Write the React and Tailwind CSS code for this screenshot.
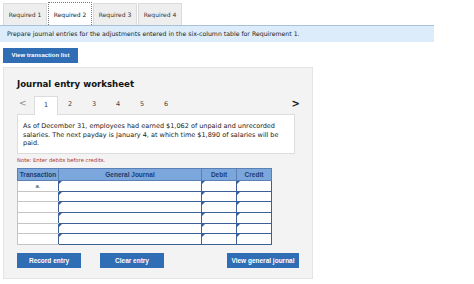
import React from 'react';

const tabs = ['Required 1', 'Required 2', 'Required 3', 'Required 4'];
const pages = ['1', '2', '3', '4', '5', '6'];
const rows = ['a.', '', '', '', '', ''];

function Marker() {
  // small blue triangle in the corner of each input
  return (
    <span className="absolute top-0 left-0 w-0 h-0 border-t-[3px] border-r-[3px] border-t-[#2f5fa8] border-r-transparent" />
  );
}

export default function App() {
  return (
    <div className="w-[474px] h-[284px] bg-white overflow-hidden font-['DejaVu_Sans',sans-serif] text-[#333]">
      {/* Requirement tabs */}
      <div className="flex pl-[3px] pt-[3px] h-[25px] items-end">
        {tabs.map((t, i) => (
          <div
            key={t}
            className={
              i === 1
                ? 'w-[44px] h-[23px] mr-[1px] flex items-center justify-center bg-white border border-dotted border-[#777] border-b-0 text-[6px] text-[#222]'
                : 'w-[44px] h-[22px] mr-[1px] flex items-center justify-center bg-[#eeeeee] border border-[#dcdcdc] border-b-0 text-[6px] text-[#333]'
            }
          >
            {t}
          </div>
        ))}
      </div>

      {/* Instruction banner */}
      <div className="w-[434px] h-[17px] bg-[#dcecfa] border-t border-[#a9c1d6] flex items-center px-[7px] text-[6.2px] text-[#222]">
        Prepare journal entries for the adjustments entered in the six-column table for Requirement 1.
      </div>

      <div className="ml-[3px] mt-[6px] w-[75px] h-[15px] bg-[#2f6db5] text-white font-['Liberation_Sans',sans-serif] font-bold text-[6px] flex items-center justify-center">
        View transaction list
      </div>

      {/* Worksheet panel */}
      <div className="ml-[3px] mt-[4px] w-[310px] h-[212px] bg-[#f3f3f3] border border-[#e4e4e4] pl-[13px]">
        <div className="mt-[10px] h-[12px] text-[8.6px] font-bold text-[#111] leading-[12px]">
          Journal entry worksheet
        </div>

        <div className="mt-[5px] flex items-end h-[19px] w-[283px] relative">
          <div className="w-[17px] text-[9px] text-[#888] leading-none pb-[6px] pl-[2px]">&lt;</div>
          {pages.map((p, i) => (
            <div
              key={p}
              className={
                i === 0
                  ? 'w-[24px] h-[19px] bg-white border border-[#dcdcdc] border-b-0 flex items-center justify-center text-[6.5px] text-[#333] relative z-10 -mb-[1px]'
                  : 'w-[24px] h-[19px] flex items-center justify-center text-[6.5px] text-[#444]'
              }
            >
              {p}
            </div>
          ))}
          <div className="flex-1" />
          <div className="text-[10px] font-bold text-[#222] leading-none pb-[5px]">&gt;</div>
        </div>

        <div className="w-[278px] h-[40px] bg-white border border-[#dcdcdc] px-[5px] pt-[7px] text-[6.5px] leading-[8.7px] text-[#222]">
          As of December 31, employees had earned $1,062 of unpaid and unrecorded salaries. The next payday is January 4, at which time $1,890 of salaries will be paid.
        </div>

        <div className="mt-[2px] text-[5.3px] text-[#b0302a] leading-[8px]">Note: Enter debits before credits.</div>

        <table className="mt-[4px] border-collapse font-['Liberation_Sans',sans-serif] text-[6.5px]">
          <thead>
            <tr className="h-[12px] bg-[#7ca7dc] text-[#1c3d6e] font-bold">
              <th className="w-[41px] border border-[#5a80b5] font-bold p-0">Transaction</th>
              <th className="w-[143px] border border-[#5a80b5] font-bold p-0">General Journal</th>
              <th className="w-[35px] border border-[#5a80b5] font-bold p-0">Debit</th>
              <th className="w-[35px] border border-[#5a80b5] font-bold p-0">Credit</th>
            </tr>
          </thead>
          <tbody>
            {rows.map((r, i) => (
              <tr key={i} className="h-[10.7px]">
                <td className="bg-white border border-[#c4c4c4] border-r-[#3b5f96] text-center text-[6px] text-[#333] p-0 leading-none">{r}</td>
                <td className="bg-white border-[1.5px] border-[#3b5f96] p-0 relative"><Marker /></td>
                <td className="bg-white border-[1.5px] border-[#3b5f96] p-0 relative"><Marker /></td>
                <td className="bg-white border-[1.5px] border-[#3b5f96] p-0 relative"><Marker /></td>
              </tr>
            ))}
          </tbody>
        </table>

        <div className="mt-[8px] flex font-['Liberation_Sans',sans-serif] font-bold text-[6.5px] text-white">
          <div className="w-[64px] h-[15px] bg-[#2f6db5] flex items-center justify-center">Record entry</div>
          <div className="ml-[19px] w-[64px] h-[15px] bg-[#2f6db5] flex items-center justify-center">Clear entry</div>
          <div className="ml-[63px] w-[72px] h-[15px] bg-[#2f6db5] flex items-center justify-center">View general journal</div>
        </div>
      </div>
    </div>
  );
}
